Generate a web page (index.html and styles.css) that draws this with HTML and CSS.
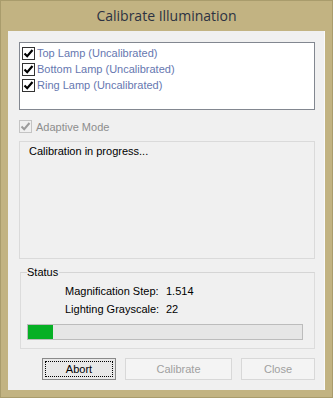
FILE: index.html
```html
<!DOCTYPE html>
<html lang="en">
<head>
  <meta charset="UTF-8">
  <title>Calibrate Illumination</title>
  <link rel="stylesheet" href="styles.css">
</head>
<body>
  <div class="window">
    <div class="title-bar">Calibrate Illumination</div>
    <div class="client">
      <!-- lamp list -->
      <div class="lamp-list">
        <div class="lamp-item">
          <span class="check"><svg width="11" height="11" viewBox="0 0 11 11"><path d="M1.5 5.5 L4.2 8.2 L9.5 2" fill="none" stroke="#000" stroke-width="2.2"/></svg></span>
          <span class="lamp-name">Top Lamp (Uncalibrated)</span>
        </div>
        <div class="lamp-item">
          <span class="check"><svg width="11" height="11" viewBox="0 0 11 11"><path d="M1.5 5.5 L4.2 8.2 L9.5 2" fill="none" stroke="#000" stroke-width="2.2"/></svg></span>
          <span class="lamp-name">Bottom Lamp (Uncalibrated)</span>
        </div>
        <div class="lamp-item">
          <span class="check"><svg width="11" height="11" viewBox="0 0 11 11"><path d="M1.5 5.5 L4.2 8.2 L9.5 2" fill="none" stroke="#000" stroke-width="2.2"/></svg></span>
          <span class="lamp-name">Ring Lamp (Uncalibrated)</span>
        </div>
      </div>

      <!-- adaptive mode (disabled) -->
      <div class="adaptive">
        <span class="check disabled"><svg width="11" height="11" viewBox="0 0 11 11"><path d="M1.5 5.5 L4.2 8.2 L9.5 2" fill="none" stroke="#9c9c9c" stroke-width="2"/></svg></span>
        <span class="adaptive-text">Adaptive Mode</span>
      </div>

      <div class="message-panel">Calibration in progress...</div>

      <!-- status group -->
      <fieldset class="status-group">
        <legend>Status</legend>
        <div class="status-row">
          <span class="status-label">Magnification Step:</span>
          <span class="status-value">1.514</span>
        </div>
        <div class="status-row">
          <span class="status-label">Lighting Grayscale:</span>
          <span class="status-value">22</span>
        </div>
        <div class="progress">
          <div class="progress-fill" style="width: 9%"></div>
        </div>
      </fieldset>

      <div class="buttons">
        <button class="btn btn-default"><span class="btn-focus">Abort</span></button>
        <button class="btn btn-wide" disabled>Calibrate</button>
        <button class="btn" disabled>Close</button>
      </div>
    </div>
  </div>
</body>
</html>
```

FILE: styles.css
```css
body {
  margin: 0;
  font-family: 'Liberation Sans', Arial, sans-serif;
  font-size: 11px;
  color: #000;
}
.window {
  width: 333px;
  height: 398px;
  box-sizing: border-box;
  background: #c2b382;
  border: 1px solid #a99c6c;
  display: flex;
  flex-direction: column;
}
.title-bar {
  height: 30px;
  display: flex;
  align-items: center;
  justify-content: center;
  padding-bottom: 2px;
  box-sizing: border-box;
  font-family: 'Open Sans', 'Liberation Sans', sans-serif;
  font-size: 14px;
  color: #2c3242;
}
.client {
  margin: 0 7px;
  height: 359px;
  box-sizing: border-box;
  background: #f0f0f0;
  border-right: 1px solid #fafafa;
  padding: 11px 9px 0 11px;
}
.lamp-list {
  height: 68px;
  box-sizing: border-box;
  background: #fff;
  border: 1px solid #828790;
  padding: 2px 0 0 2px;
}
.lamp-item {
  display: flex;
  align-items: center;
  height: 16px;
}
.check {
  width: 13px;
  height: 13px;
  box-sizing: border-box;
  border: 1px solid #333;
  background: #fff;
  display: flex;
  align-items: center;
  justify-content: center;
  margin-right: 2px;
}
.check.disabled {
  border-color: #c4c4c4;
  background: #f0f0f0;
}
.lamp-name {
  color: #6677b0;
}
.adaptive {
  display: flex;
  align-items: center;
  height: 13px;
  margin-top: 10px;
}
.adaptive .check {
  margin-right: 4px;
}
.adaptive-text {
  color: #8d8d8d;
}
.message-panel {
  margin-top: 8px;
  height: 118px;
  box-sizing: border-box;
  border: 1px solid #dadada;
  padding: 3px 9px;
}
.status-group {
  margin: 7px 0 0 1px;
  padding: 4px 6px 7px 6px;
  height: 83px;
  box-sizing: border-box;
  border: 1px solid #dcdcdc;
  border-top-color: #d5d5d5;
}
.status-group legend {
  padding: 0 1px 0 0;
  margin-left: 0;
  font-size: 11px;
}
.status-row {
  display: flex;
  height: 18px;
  align-items: center;
  padding-left: 38px;
}
.status-label {
  width: 101px;
}
.progress {
  margin-top: 6px;
  width: 276px;
  height: 16px;
  box-sizing: border-box;
  border: 1px solid #bcbcbc;
  background: #e6e6e6;
}
.progress-fill {
  height: 100%;
  background: #06b025;
}
.buttons {
  display: flex;
  margin-top: 9px;
  padding-left: 23px;
  gap: 9px;
}
.btn {
  width: 74px;
  height: 22px;
  box-sizing: border-box;
  border: 1px solid #d8d8d8;
  background: #f4f4f4;
  font-family: 'Liberation Sans', Arial, sans-serif;
  font-size: 11px;
  color: #a0a0a0;
  padding: 2px;
}
.btn-wide {
  width: 107px;
}
.btn-default {
  border-color: #8a8a8a;
  background: #e8e8e8;
  color: #000;
}
.btn-focus {
  display: flex;
  align-items: center;
  justify-content: center;
  height: 100%;
  box-sizing: border-box;
  border: 1px dotted #000;
}
```
